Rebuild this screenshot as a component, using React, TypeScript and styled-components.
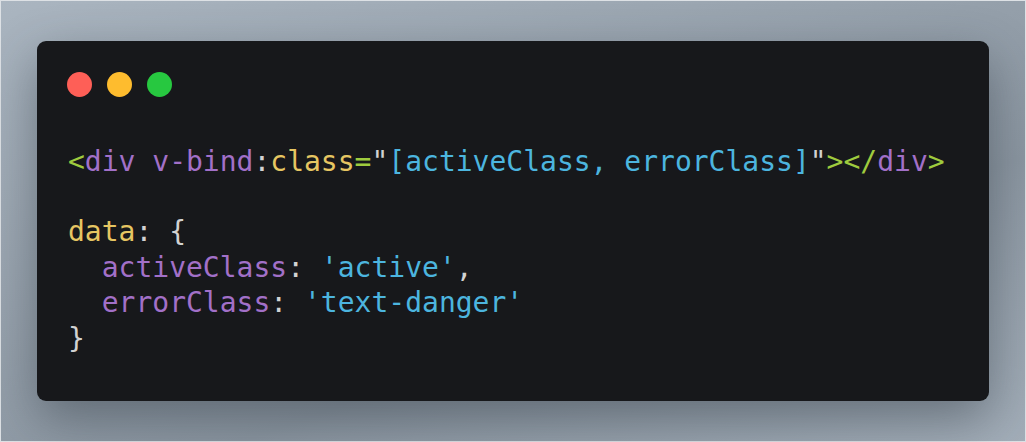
import React from "react";
import styled, { createGlobalStyle } from "styled-components";

const Global = createGlobalStyle`
  html, body { margin: 0; padding: 0; }
  body { width: 1026px; height: 442px; overflow: hidden; }
`;

const Backdrop = styled.div`
  box-sizing: border-box;
  width: 1026px;
  height: 442px;
  border: 1px solid #dde1e5;
  padding: 40px 36px 40px 36px;
  display: flex;
  background: linear-gradient(160deg, #aab5c0 0%, #97a2ad 40%, #8b96a1 65%, #a3aeb9 100%);
`;

const Window = styled.div`
  flex: 1;
  display: flex;
  flex-direction: column;
  background: #17181b;
  border-radius: 9px;
  box-shadow: 0 18px 50px rgba(40, 48, 58, 0.45);
  padding: 31px 30px 0 30px;
`;

const Dots = styled.div`
  display: flex;
  gap: 15px;
`;

const Dot = styled.span<{ $c: string }>`
  width: 25px;
  height: 25px;
  border-radius: 50%;
  background: ${(p) => p.$c};
`;

const Code = styled.pre`
  margin: 46.5px 0 0 1px;
  font-family: "DejaVu Sans Mono", monospace;
  font-size: 28px;
  line-height: 35.4px;
  color: #d2d2d2;
  white-space: pre;
`;

const T = styled.span<{ $k: "g" | "p" | "y" | "b" | "w" }>`
  color: ${(p) =>
    ({ g: "#9fcb3e", p: "#a270c8", y: "#e6c662", b: "#4cb5df", w: "#d2d2d2" })[p.$k]};
`;

export default function App() {
  return (
    <>
      <Global />
      <Backdrop>
        <Window>
          <Dots>
            <Dot $c="#fe5f57" />
            <Dot $c="#febc2e" />
            <Dot $c="#27c840" />
          </Dots>
          <Code>
            <T $k="g">&lt;</T>
            <T $k="p">div v-bind</T>
            <T $k="w">:</T>
            <T $k="y">class</T>
            <T $k="g">=</T>
            <T $k="w">"</T>
            <T $k="b">[activeClass, errorClass]</T>
            <T $k="w">"</T>
            <T $k="g">&gt;&lt;/</T>
            <T $k="p">div</T>
            <T $k="g">&gt;</T>
            {"\n\n"}
            <T $k="y">data</T>
            <T $k="w">{": {"}</T>
            {"\n  "}
            <T $k="p">activeClass</T>
            <T $k="w">: </T>
            <T $k="b">'active'</T>
            <T $k="w">,</T>
            {"\n  "}
            <T $k="p">errorClass</T>
            <T $k="w">: </T>
            <T $k="b">'text-danger'</T>
            {"\n"}
            <T $k="w">{"}"}</T>
          </Code>
        </Window>
      </Backdrop>
    </>
  );
}
